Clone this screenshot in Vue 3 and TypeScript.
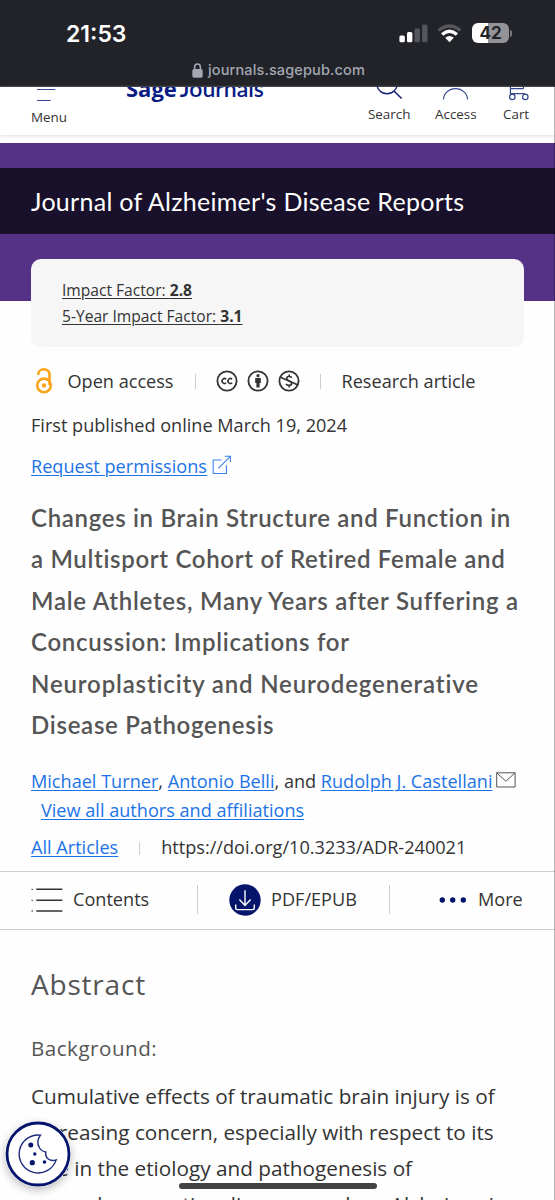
<script setup lang="ts">
const titleLines: string[] = [
  'Changes in Brain Structure and Function in',
  'a Multisport Cohort of Retired Female and',
  'Male Athletes, Many Years after Suffering a',
  'Concussion: Implications for',
  'Neuroplasticity and Neurodegenerative',
  'Disease Pathogenesis',
]

const abstractLines: string[] = [
  'Cumulative effects of traumatic brain injury is of',
  'increasing concern, especially with respect to its',
  'role in the etiology and pathogenesis of',
  "neurodegenerative diseases such as Alzheimer's",
]
</script>

<template>
  <div class="page">
    <div class="status">
      <div class="status-row">
        <span class="clock">21:53</span>
        <div class="indicators">
          <svg class="signal" width="29" height="19" viewBox="0 0 29 19">
            <rect x="0.4" y="11.5" width="5.4" height="6.8" rx="1.5" fill="#fff" />
            <rect x="8" y="8" width="5.4" height="10.3" rx="1.5" fill="#fff" />
            <rect x="15.5" y="4.4" width="5.4" height="13.9" rx="1.5" fill="#55565b" />
            <rect x="23.1" y="0.6" width="5.4" height="17.7" rx="1.5" fill="#55565b" />
          </svg>
          <svg class="wifi" width="25" height="19" viewBox="0 0 25 19">
            <path d="M1.6 6.6Q12.5 -2.6 23.4 6.6" fill="none" stroke="#55565b" stroke-width="3.2" />
            <path d="M5.1 10.4Q12.5 4 19.9 10.4" fill="none" stroke="#fff" stroke-width="3.3" />
            <path d="M8.2 13.8Q12.5 10.2 16.8 13.8L12.5 18.2Z" fill="#fff" />
          </svg>
          <div class="battery"><span>42</span></div>
          <i class="battery-tip"></i>
        </div>
      </div>
      <div class="address">
        <svg width="11" height="15" viewBox="0 0 11 15">
          <path d="M2.6 7V4.2a2.9 3.2 0 0 1 5.8 0V7" fill="none" stroke="#a3a8b2" stroke-width="1.6" />
          <rect x="0.3" y="6.1" width="10.4" height="8.6" rx="1.8" fill="#a3a8b2" />
        </svg>
        <span>journals.sagepub.com</span>
      </div>
    </div>

    <header class="site-header">
      <div class="menu">
        <svg width="20" height="17" viewBox="0 0 20 17">
          <path d="M1 2.5h18.3M1 13.5h13.6" stroke="#34478f" stroke-width="1.1" />
        </svg>
        <span>Menu</span>
      </div>
      <div class="brand"><b>Sage</b><span>Journals</span></div>
      <nav class="tools">
        <div class="tool search">
          <svg width="30" height="17" viewBox="0 0 30 17">
            <circle cx="13" cy="-3.4" r="10.2" fill="none" stroke="#1b2575" stroke-width="1.4" />
            <path d="M20 4l7.6 7.5" stroke="#1b2575" stroke-width="1.6" />
          </svg>
          <span>Search</span>
        </div>
        <div class="tool access">
          <svg width="28" height="17" viewBox="0 0 28 17">
            <path d="M2.5 12.6a12 11 0 0 1 24 0" fill="none" stroke="#34478f" stroke-width="1.2" />
          </svg>
          <span>Access</span>
        </div>
        <div class="tool cart">
          <svg width="24" height="17" viewBox="0 0 24 17">
            <g fill="none" stroke="#34478f" stroke-width="1.2">
              <path d="M4.4 -2v10.5M4.4 1.7h12.8l.8-3.5M4.4 6.7H18l1 1" />
              <circle cx="6.3" cy="9.9" r="2.7" />
              <circle cx="19.3" cy="9.9" r="2.7" />
            </g>
          </svg>
          <span>Cart</span>
        </div>
      </nav>
    </header>

    <section class="hero">
      <h2 class="journal">Journal of Alzheimer's Disease Reports</h2>
      <div class="impact">
        <a>Impact Factor: <b>2.8</b></a>
        <a>5-Year Impact Factor: <b>3.1</b></a>
      </div>
    </section>

    <main class="article">
      <div class="meta">
        <svg class="oa" width="18" height="26" viewBox="0 0 18 26">
          <g fill="none" stroke="#fba31b" stroke-width="2.6">
            <circle cx="9" cy="17.4" r="6.8" />
            <path d="M3.3 7V6a5.6 4.7 0 0 1 11.2 0v11" />
          </g>
          <circle cx="9" cy="17.4" r="2.2" fill="#fba31b" />
        </svg>
        <span class="open-access">Open access</span>
        <i class="rule"></i>
        <div class="licenses">
          <svg width="22" height="22" viewBox="0 0 22 22">
            <circle cx="11" cy="11" r="9.6" fill="none" stroke="#333" stroke-width="1.8" />
            <path d="M10.2 9.3a2.4 2.4 0 1 0 0 3.4M16.1 9.3a2.4 2.4 0 1 0 0 3.4" fill="none" stroke="#333" stroke-width="1.6" />
          </svg>
          <svg width="22" height="22" viewBox="0 0 22 22">
            <circle cx="11" cy="11" r="9.6" fill="none" stroke="#333" stroke-width="1.8" />
            <circle cx="11" cy="5.7" r="1.6" fill="#333" />
            <path d="M8.2 7.9h5.6v5h-1.2v4.6H9.4v-4.6H8.2Z" fill="#333" />
          </svg>
          <svg width="22" height="22" viewBox="0 0 22 22">
            <circle cx="11" cy="11" r="9.6" fill="none" stroke="#333" stroke-width="1.8" />
            <path d="M13.8 7.7C12.6 6.1 8.7 6 8.7 8.3c0 2.7 4.9 2.4 4.9 5.1 0 2.6-4.2 2.5-5.7.6M11.2 4.6v2M11.2 15.4v2" fill="none" stroke="#333" stroke-width="1.6" />
            <path d="M2 7l18 8" stroke="#333" stroke-width="1.8" />
          </svg>
        </div>
        <i class="rule second"></i>
        <span class="kind">Research article</span>
      </div>

      <div class="published"><span>First published online March 19, 2024</span></div>

      <div class="permissions">
        <a>Request permissions</a>
        <svg width="20" height="20" viewBox="0 0 20 20">
          <path d="M9.5 5H1.2v13.5h13.2V10.3M6.3 13.3L18.3 1.3M12.7 1.2h5.7v5.7" fill="none" stroke="#3f83ea" stroke-width="1.1" />
        </svg>
      </div>

      <h1 class="title">
        <span v-for="(line, i) in titleLines" :key="line" :class="'t' + i">{{ line }}</span>
      </h1>

      <div class="authors">
        <div class="names">
          <span><a>Michael Turner</a>, <a>Antonio Belli</a>, and <a>Rudolph J. Castellani</a></span>
          <svg width="20" height="16" viewBox="0 0 20 16">
            <path d="M.7.8h18.4v14.2H.7ZM.7.8l9.2 8.4L19.1.8" fill="none" stroke="#555" stroke-width="1" />
          </svg>
        </div>
        <div class="view-all"><a>View all authors and affiliations</a></div>
      </div>

      <div class="links">
        <a>All Articles</a>
        <i></i>
        <span>https://doi.org/10.3233/ADR-240021</span>
      </div>
    </main>

    <div class="toolbar">
      <div class="contents">
        <svg width="32" height="26" viewBox="0 0 32 26">
          <path d="M5.3 2.3h26M5.3 13.3h26M5.3 24h26" stroke="#333" stroke-width="1.4" />
          <path d="M.5 2.3h1.4M.5 13.3h1.4M.5 24h1.4" stroke="#555" stroke-width="1.3" />
        </svg>
        <span>Contents</span>
      </div>
      <i></i>
      <div class="pdf">
        <svg width="32" height="32" viewBox="0 0 32 32">
          <circle cx="16" cy="16" r="15.7" fill="#05156b" />
          <path d="M16 6.2v15M10.4 15.6l5.6 5.8 5.6-5.8M6.7 20.6v3.5q0 1.5 1.5 1.5h15.600q1.500 0 1.500-1.500v-3.500" fill="none" stroke="#fff" stroke-width="1.4" />
        </svg>
        <span>PDF/EPUB</span>
      </div>
      <i></i>
      <div class="more">
        <svg width="28" height="6" viewBox="0 0 28 6">
          <circle cx="3.3" cy="3" r="2.7" fill="#05156b" />
          <circle cx="13.7" cy="3" r="2.7" fill="#05156b" />
          <circle cx="24.3" cy="3" r="2.7" fill="#05156b" />
        </svg>
        <span>More</span>
      </div>
    </div>

    <section class="abstract">
      <h2>Abstract</h2>
      <h3>Background:</h3>
      <p>
        <span v-for="line in abstractLines" :key="line">{{ line }}</span>
      </p>
    </section>

    <button class="cookie" aria-label="Cookies">
      <svg width="66" height="66" viewBox="0 0 66 66">
        <circle cx="33" cy="33" r="31" fill="#fff" stroke="#05156b" stroke-width="2.8" />
        <path d="M35.5 14.1A19 19 0 1 0 51.2 38.9Q45.500 40.500 42.300 37.300Q40 34.500 40.800 31Q36.500 30.500 34.300 26.500Q30.800 20 35.500 14.100Z" fill="none" stroke="#1c2b80" stroke-width="1.4" />
        <g fill="#05156b">
          <circle cx="25.8" cy="24" r="2.5" />
          <circle cx="29.8" cy="33" r="1.7" />
          <circle cx="27.3" cy="41.7" r="2.6" />
          <circle cx="39.5" cy="41" r="1.8" />
        </g>
      </svg>
    </button>
    <div class="home-bar"></div>
    <div class="edge"></div>
  </div>
</template>

<style>
body {
  background: #fff;
}
</style>

<style scoped>
.page {
  position: relative;
  width: 555px;
  height: 1200px;
  overflow: hidden;
  background: #fefefe;
  color: #333;
  font-family: 'Open Sans', 'Noto Sans', sans-serif;
  font-size: 18.12px;
  white-space: nowrap;
}
h1,
h2,
h3,
p {
  margin: 0;
  font-weight: 400;
}
svg {
  display: block;
  flex: none;
}
.status {
  height: 87px;
  box-sizing: border-box;
  padding-top: 18px;
  background: #222329;
  font-family: Inter, sans-serif;
}
.status-row {
  display: flex;
  justify-content: space-between;
  height: 30px;
  padding: 0 43px 0 66px;
}
.clock {
  color: #fff;
  font-size: 23px;
  font-weight: 600;
  line-height: 32px;
}
.indicators {
  display: flex;
  align-items: center;
}
.wifi {
  margin: 0 10px 0 9px;
}
.battery {
  width: 37px;
  height: 20px;
  border-radius: 6px;
  background: linear-gradient(90deg, #fff 43%, #939397 43%);
  color: #222329;
  font-size: 17px;
  font-weight: 700;
  line-height: 20px;
  text-align: center;
}
.battery-tip {
  width: 2px;
  height: 7px;
  margin-left: 1px;
  border-radius: 0 2px 2px 0;
  background: #77787c;
}
.address {
  display: flex;
  align-items: center;
  height: 18px;
  margin-top: 13px;
  padding-left: 192px;
  gap: 5px;
  color: #a3a8b2;
  font-size: 14.5px;
  font-weight: 500;
  letter-spacing: 0.13px;
  line-height: 18px;
}
.address svg {
  margin-top: 0;
}
.site-header {
  display: flex;
  height: 48px;
  overflow: hidden;
  background: #fff;
  box-shadow: 0 1px 3px #dcdcec;
  font-size: 13.4px;
  line-height: 18px;
}
.menu {
  width: 94px;
  padding-left: 31px;
  box-sizing: border-box;
}
.menu svg {
  margin: 0 0 4px 5px;
}
.brand {
  display: flex;
  gap: 3px;
  width: 140px;
  margin: -16px 0 0 32px;
  color: #0a1c84;
  font-size: 22px;
  line-height: 34px;
}
.brand b {
  font-weight: 700;
}
.brand span {
  font-family: Lato, sans-serif;
  font-size: 23px;
  font-weight: 600;
}
.tools {
  display: flex;
  margin-left: 102px;
}
.tool svg {
  margin-bottom: 1px;
}
.search {
  width: 67px;
}
.search svg {
  margin-left: 6px;
}
.access {
  width: 68px;
}
.access svg {
  margin-left: 6px;
}
.cart svg {
  margin-left: 3px;
}
.hero {
  height: 158px;
  margin-top: 8px;
  padding-top: 24.5px;
  box-sizing: border-box;
  background: #553286;
}
.journal {
  height: 66px;
  padding-left: 31px;
  background: #19112b;
  color: #fff;
  font-family: Lato, sans-serif;
  font-size: 25px;
  line-height: 66px;
  letter-spacing: 0.28px;
}
.impact {
  width: 493px;
  height: 88px;
  margin: 25.5px 0 0 31px;
  padding: 18px 0 0 31px;
  box-sizing: border-box;
  border-radius: 10px;
  background: #f6f6f6;
  font-size: 15.6px;
  line-height: 26px;
}
.impact a {
  display: block;
  width: max-content;
  text-decoration: underline;
  text-underline-offset: 2px;
}
.article {
  padding: 46px 0 0 31px;
}
.article a {
  color: #1c73e8;
  text-decoration: underline;
  text-underline-offset: 2px;
  text-decoration-thickness: 1.3px;
}
.meta {
  display: flex;
  align-items: center;
  height: 68px;
}
.oa {
  margin: 0 14.5px 0 4px;
}
.rule {
  width: 1px;
  height: 15px;
  margin: 0 20px 0 21px;
  background: #ccc;
}
.rule.second {
  margin: 0 21px 0 20px;
}
.licenses {
  display: flex;
  gap: 9px;
}
.published {
  height: 30px;
  margin-top: -5px;
  line-height: 30px;
}
.permissions {
  display: flex;
  gap: 5px;
  height: 30px;
  margin-top: 11px;
  line-height: 30px;
}
.permissions svg {
  margin-top: 4px;
}
.title {
  margin-top: 16px;
  color: #555;
  font-family: Lato, sans-serif;
  font-size: 24px;
  font-weight: 600;
  letter-spacing: 0.68px;
  line-height: 41.4px;
}
.title span,
.abstract p span {
  display: block;
}
.title .t2 {
  letter-spacing: 0.75px;
}
.title .t3,
.title .t5 {
  letter-spacing: 0.73px;
}
.title .t4 {
  letter-spacing: 0.85px;
}
.authors {
  margin-top: 22px;
}
.names {
  display: flex;
  gap: 4px;
  line-height: 29px;
}
.names svg {
  margin-top: 5px;
}
.view-all {
  padding-left: 10px;
  line-height: 29px;
}
.links {
  display: flex;
  align-items: center;
  height: 46px;
  box-sizing: border-box;
  padding-bottom: 2px;
}
.links i {
  width: 1px;
  height: 13px;
  margin: 2px 21px 0;
  background: #ccc;
}
.toolbar {
  display: flex;
  align-items: center;
  height: 59px;
  box-sizing: border-box;
  padding: 0 31px 2px;
  border-top: 1px solid #ccc;
  border-bottom: 1px solid #ccc;
}
.toolbar > div {
  display: flex;
  align-items: center;
}
.toolbar span {
  margin-top: -1px;
}
.toolbar > i {
  width: 1px;
  height: 29px;
  background: #ccc;
}
.contents {
  width: 166px;
  gap: 10px;
}
.pdf {
  width: 160px;
  margin-left: 31px;
  gap: 10px;
}
.more {
  margin-left: 49px;
  gap: 11px;
}
.abstract {
  padding: 26px 0 0 31px;
}
.abstract h2 {
  color: #555;
  font-size: 28px;
  letter-spacing: 0.8px;
  line-height: 56px;
}
.abstract h3 {
  margin-top: 13px;
  color: #555;
  font-size: 20.6px;
  letter-spacing: 0.5px;
  line-height: 46px;
}
.abstract p {
  margin-top: 7px;
  font-size: 20.73px;
  line-height: 36px;
}
.abstract p span:last-child {
  letter-spacing: 0.15px;
}
.cookie {
  position: absolute;
  left: 5px;
  top: 1121px;
  width: 66px;
  height: 66px;
  padding: 0;
  border: 0;
  border-radius: 50%;
  background: #fff;
  box-shadow: 0 3px 8px rgba(0, 0, 0, 0.25);
}
.home-bar {
  position: absolute;
  left: 179px;
  top: 1183px;
  width: 198px;
  height: 6px;
  border-radius: 3px;
  background: #424242;
}
.edge {
  position: absolute;
  right: 0;
  top: 87px;
  bottom: 0;
  width: 1px;
  background: rgba(0, 0, 0, 0.28);
}
</style>
